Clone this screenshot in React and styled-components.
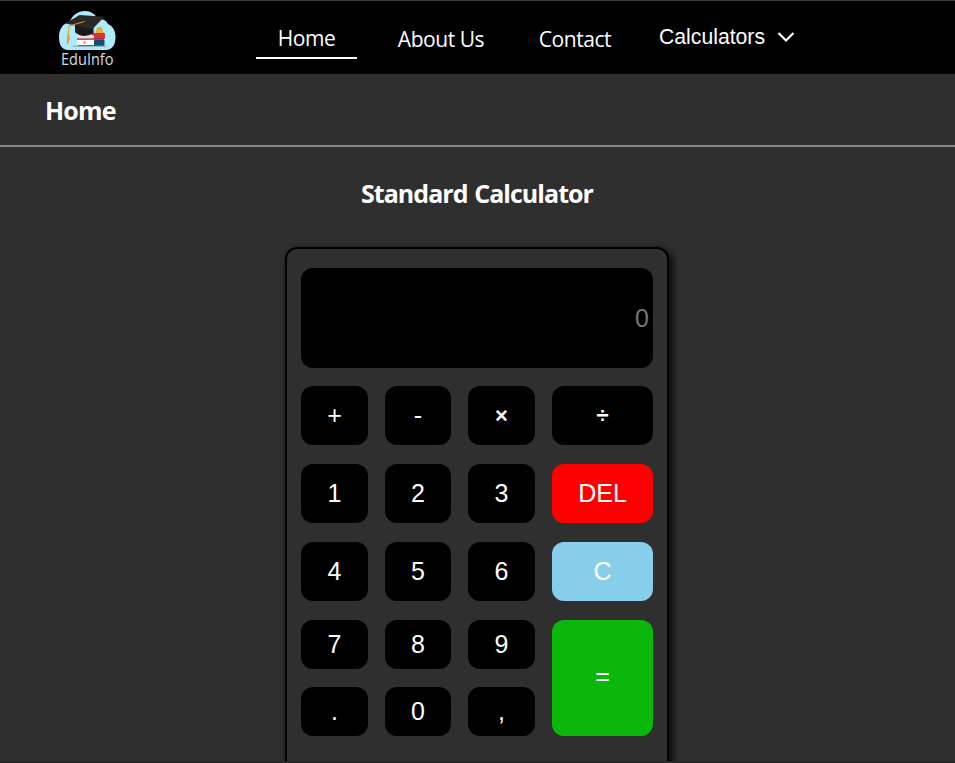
import React from "react";
import styled, { createGlobalStyle, css } from "styled-components";

const GlobalStyle = createGlobalStyle`
  *, *::before, *::after { box-sizing: border-box; }
  body { margin: 0; background: #2f2f2f; color: #fff; font-family: "Open Sans", "Noto Sans", sans-serif; overflow: hidden; }
`;

const Page = styled.div`
  height: 763px;
  overflow: hidden;
  display: flex;
  flex-direction: column;
  border-top: 1px solid #3b3b3b;
  border-bottom: 2px solid #292627;
  background: #2f2f2f;
`;

const Header = styled.header`
  display: flex;
  flex: 0 0 73px;
  background: #000;
  padding-left: 56px;
`;

const Logo = styled.svg`
  display: block;
  width: 64px;
  height: 64px;
  margin-top: 5px;
`;

const LogoName = styled.text`
  font: 400 15.5px "Open Sans", sans-serif;
  fill: #d4dde0;
`;

const Nav = styled.nav`
  display: flex;
  align-items: flex-start;
  margin-left: 136px;
`;

const NavLink = styled.a`
  display: block;
  width: ${(p) => p.$width}px;
  height: 45px;
  margin-top: ${(p) => (p.$active ? 13 : 14)}px;
  margin-right: ${(p) => p.$gap || 0}px;
  border-bottom: 2px solid ${(p) => (p.$active ? "#fff" : "transparent")};
  font-size: 21px;
  line-height: 48px;
  letter-spacing: -0.45px;
  text-align: center;
  white-space: nowrap;
  color: #fff;
`;

const NavMenu = styled.button`
  display: flex;
  align-items: center;
  gap: 12px;
  height: 30px;
  margin: 21px 0 0;
  padding: 0;
  border: 0;
  background: none;
  color: #fff;
  font: 400 21.2px "Liberation Sans", Arial, sans-serif;
`;

const Chevron = styled.svg`
  width: 18px;
  height: 12px;
  fill: none;
  stroke: #fff;
  stroke-width: 2.2;
`;

const PageBar = styled.div`
  flex: 0 0 73px;
  padding: 1px 0 0 45px;
  border-bottom: 2px solid #868686;
  font-size: 25px;
  font-weight: 700;
  line-height: 70px;
  letter-spacing: -0.8px;
`;

const Title = styled.h1`
  flex: none;
  margin: 29px 0 36px;
  padding-right: 1px;
  font-size: 25px;
  font-weight: 700;
  line-height: 35px;
  letter-spacing: -0.95px;
  word-spacing: 1px;
  text-align: center;
`;

const Calculator = styled.section`
  flex: none;
  align-self: center;
  width: 384px;
  height: 525px;
  margin-right: 1px;
  padding: 19px 14px;
  border: 2px solid #000;
  border-radius: 12px;
  box-shadow: 3px 3px 8px #000;
`;

const Display = styled.input`
  display: block;
  width: 100%;
  height: 100px;
  margin-bottom: 18px;
  padding: 0 4px;
  border: 0;
  border-radius: 12px;
  background: #000;
  color: #fff;
  font: 400 25px "Liberation Sans", Arial, sans-serif;
  text-align: right;
  &::placeholder { color: #757575; opacity: 1; }
`;

const Keys = styled.div`
  display: grid;
  grid-template-columns: 67px 66px 67px 101px;
  column-gap: 17px;
  grid-template-rows: 59px 59px 59px 116px;
  row-gap: 19px;
`;

const LowerKeys = styled.div`
  grid-column: span 3;
  display: grid;
  grid-template-columns: 67px 66px 67px;
  grid-template-rows: 49px 49px;
  gap: 18px 17px;
`;

const tones = { base: "#000", danger: "#f00", clear: "#87ceeb", equals: "#0cb70c" };

const Key = styled.button`
  border: 0;
  padding: 0;
  border-radius: 12px;
  background: ${(p) => tones[p.$tone || "base"]};
  color: #fff;
  font: 400 25px "Liberation Sans", Arial, sans-serif;
  ${(p) => p.$bold && css`
    font-size: 22px;
    font-weight: 700;
  `}
  ${(p) => p.$raised && css`
    padding-bottom: 3px;
  `}
`;

const upperKeys = [
  { label: "+" }, { label: "-" }, { label: "×", bold: true }, { label: "÷", bold: true },
  { label: "1" }, { label: "2" }, { label: "3" }, { label: "DEL", tone: "danger" },
  { label: "4" }, { label: "5" }, { label: "6" }, { label: "C", tone: "clear" },
];
const lowerKeys = ["7", "8", "9", ".", "0", ","];

function BrandLogo() {
  return (
    <Logo viewBox="0 0 64 64">
      <path fill="#aeeafa" d="M12 44C6 44 3 39 3 31c0-8 4-14 11-15 2-7 8-11 15-11 6 0 10 3 13 8 5 0 8 1 10 5 5 2 7.500 7 7.500 13 0 8-3.500 13-9.500 13z" />
      <path fill="#8fb8c4" d="M16 39.500h36l-3 1.500H18z" />
      <path fill="#e9ad2c" d="m40 25 1-3 3-1.500 3 2.500-1 2 2.500 1.500-2 2h-7z" />
      <rect fill="#cf3642" x="36" y="27" width="13" height="6" rx="1" />
      <path fill="#f3dcd8" d="M22 29.500h16v3H22z" />
      <path fill="#a51f32" d="M21 32.500h27v1.200H21z" />
      <rect fill="#fff" x="21.500" y="34" width="18" height="5" rx=".8" />
      <circle fill="#d63a43" cx="28.500" cy="36.600" r="1" />
      <path fill="#b52b39" d="M22 39h17v.8H22z" />
      <rect fill="#164c76" x="38" y="33.800" width="10.500" height="6" rx="1" />
      <path fill="#1b1a1a" d="M19 19h18.500v8.500Q29 31.500 23.500 29 20 27.500 19 26z" />
      <path fill="#2b2928" d="m9.500 17.500 14-8.500 25 1.700-12 12.300z" />
      <path fill="none" stroke="#d9932b" strokeWidth="1" d="m28.500 15.500-15.500 4.500-1 9" />
      <path fill="#dfa332" d="m11.300 28 1.700 0 1 4-1.500 5-2 1.500z" />
      <LogoName x="5" y="59" textLength="52.5" lengthAdjust="spacingAndGlyphs">EduInfo</LogoName>
    </Logo>
  );
}

export default function App() {
  return (
    <>
      <GlobalStyle />
      <Page>
        <Header>
          <BrandLogo />
          <Nav>
            <NavLink $width={101} $gap={34} $active>Home</NavLink>
            <NavLink $width={100} $gap={42}>About Us</NavLink>
            <NavLink $width={84} $gap={42}>Contact</NavLink>
            <NavMenu>
              Calculators
              <Chevron viewBox="0 0 18 12"><path d="m1.500 2 7.500 7.500L16.500 2" /></Chevron>
            </NavMenu>
          </Nav>
        </Header>
        <PageBar>Home</PageBar>
        <Title>Standard Calculator</Title>
        <Calculator>
          <Display placeholder="0" readOnly />
          <Keys>
            {upperKeys.map((k) => (
              <Key key={k.label} $tone={k.tone} $bold={k.bold}>{k.label}</Key>
            ))}
            <LowerKeys>
              {lowerKeys.map((label) => (
                <Key key={label}>{label}</Key>
              ))}
            </LowerKeys>
            <Key $tone="equals" $raised>=</Key>
          </Keys>
        </Calculator>
      </Page>
    </>
  );
}
